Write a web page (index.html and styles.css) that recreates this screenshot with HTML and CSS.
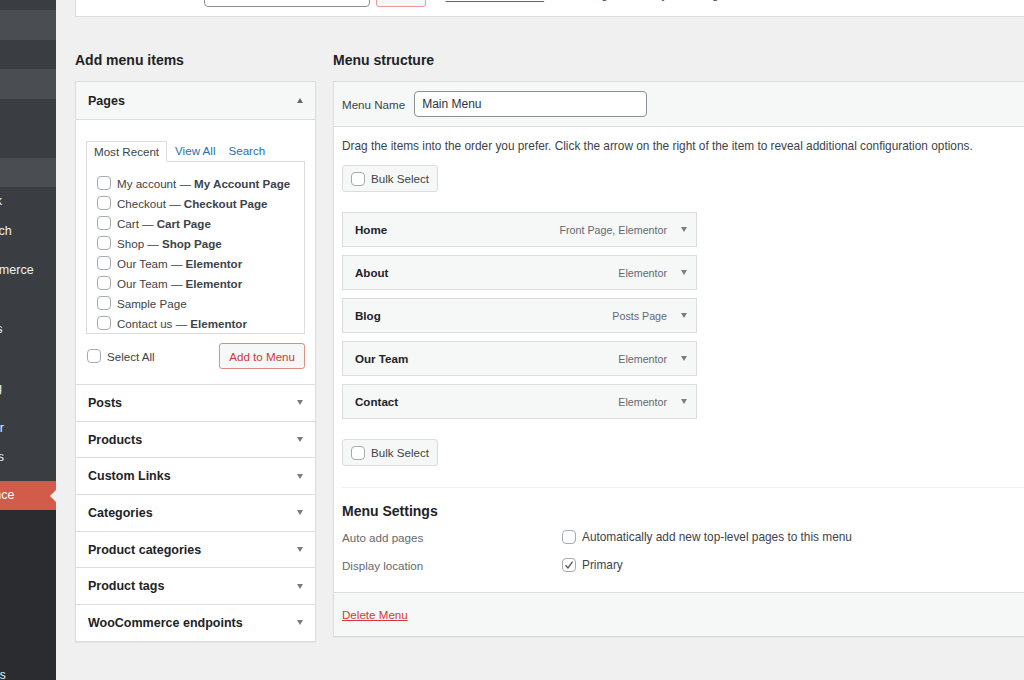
FILE: index.html
```html
<!DOCTYPE html>
<html lang="en">
<head>
    <meta charset="UTF-8">
    <meta name="viewport" content="width=device-width, initial-scale=1.0">
    <title>Menus</title>
    <link rel="stylesheet" href="styles.css">
</head>
<body>
    <div class="sidebar">
        <ul class="admin-menu">
            <li class="top-cut"></li>
            <li class="shade">Posts</li>
            <li>Media</li>
            <li class="shade">Pages</li>
            <li>Forms</li>
            <li>Links</li>
            <li class="shade">Blocks</li>
            <li>Feedback</li>
            <li>Site Search</li>
            <li class="sep"></li>
            <li>WooCommerce</li>
            <li>Products</li>
            <li>Payments</li>
            <li>Analytics</li>
            <li>Marketing</li>
            <li class="sep"></li>
            <li>Elementor</li>
            <li>Templates</li>
            <li class="sep sep-short"></li>
            <li class="current">Appearance</li>
            <li class="sub">Themes</li>
            <li class="sub">Editor</li>
            <li class="sub">Menus</li>
            <li class="sub">Header</li>
            <li class="sub">Widgets</li>
            <li class="sub spacer"></li>
            <li class="sub">Extensions</li>
        </ul>
    </div>

    <div class="main">
        <div class="top-box">
            <span class="top-label">Select a menu to edit:</span>
            <span class="top-select">Main Menu (Primary)</span>
            <span class="top-button">Select</span>
            <span class="top-note">or <a href="#">create a new menu</a>. Do not forget to save your changes!</span>
        </div>

        <div class="columns">
            <div class="col-left">
                <h2>Add menu items</h2>
                <div class="accordion">
                    <div class="section open">
                        <div class="section-title">Pages <span class="arrow-up"></span></div>
                        <div class="section-content">
                            <div class="tabs">
                                <span class="tab active">Most Recent</span>
                                <a class="tab" href="#">View All</a>
                                <a class="tab" href="#">Search</a>
                            </div>
                            <ul class="page-list">
                                <li><span class="cb"></span>My account — <strong>My Account Page</strong></li>
                                <li><span class="cb"></span>Checkout — <strong>Checkout Page</strong></li>
                                <li><span class="cb"></span>Cart — <strong>Cart Page</strong></li>
                                <li><span class="cb"></span>Shop — <strong>Shop Page</strong></li>
                                <li><span class="cb"></span>Our Team — <strong>Elementor</strong></li>
                                <li><span class="cb"></span>Our Team — <strong>Elementor</strong></li>
                                <li><span class="cb"></span>Sample Page</li>
                                <li><span class="cb"></span>Contact us — <strong>Elementor</strong></li>
                            </ul>
                            <div class="list-actions">
                                <label class="select-all"><span class="cb"></span>Select All</label>
                                <button class="btn-add">Add to Menu</button>
                            </div>
                        </div>
                    </div>
                    <div class="section"><div class="section-title">Posts <span class="arrow-down"></span></div></div>
                    <div class="section"><div class="section-title">Products <span class="arrow-down"></span></div></div>
                    <div class="section"><div class="section-title">Custom Links <span class="arrow-down"></span></div></div>
                    <div class="section"><div class="section-title">Categories <span class="arrow-down"></span></div></div>
                    <div class="section"><div class="section-title">Product categories <span class="arrow-down"></span></div></div>
                    <div class="section"><div class="section-title">Product tags <span class="arrow-down"></span></div></div>
                    <div class="section"><div class="section-title">WooCommerce endpoints <span class="arrow-down"></span></div></div>
                </div>
            </div>

            <div class="col-right">
                <h2>Menu structure</h2>
                <div class="menu-edit">
                    <div class="menu-header">
                        <label for="menu-name">Menu Name</label>
                        <input id="menu-name" class="menu-name" type="text" value="Main Menu">
                    </div>
                    <div class="menu-body">
                        <p class="hint">Drag the items into the order you prefer. Click the arrow on the right of the item to reveal additional configuration options.</p>
                        <span class="bulk"><span class="cb"></span>Bulk Select</span>

                        <ul class="menu-items">
                            <li><span class="item-title">Home</span><span class="item-type">Front Page, Elementor</span><span class="arrow-down"></span></li>
                            <li><span class="item-title">About</span><span class="item-type">Elementor</span><span class="arrow-down"></span></li>
                            <li><span class="item-title">Blog</span><span class="item-type">Posts Page</span><span class="arrow-down"></span></li>
                            <li><span class="item-title">Our Team</span><span class="item-type">Elementor</span><span class="arrow-down"></span></li>
                            <li><span class="item-title">Contact</span><span class="item-type">Elementor</span><span class="arrow-down"></span></li>
                        </ul>

                        <span class="bulk bulk-bottom"><span class="cb"></span>Bulk Select</span>

                        <div class="menu-settings">
                            <h3>Menu Settings</h3>
                            <div class="setting-row">
                                <span class="setting-label">Auto add pages</span>
                                <span class="setting-value"><span class="cb"></span>Automatically add new top-level pages to this menu</span>
                            </div>
                            <div class="setting-row">
                                <span class="setting-label">Display location</span>
                                <span class="setting-value"><span class="cb checked"><svg width="10" height="10" viewBox="0 0 10 10"><path d="M1.5 5.2 L4 8 L8.6 1.6" fill="none" stroke="#50575e" stroke-width="1.3"/></svg></span>Primary</span>
                            </div>
                        </div>
                    </div>
                    <div class="menu-footer">
                        <a class="delete" href="#">Delete Menu</a>
                    </div>
                </div>
            </div>
        </div>
    </div>
</body>
</html>
```

FILE: styles.css
```css
* {
    box-sizing: border-box;
}
body {
    margin: 0;
    height: 680px;
    overflow: hidden;
    display: flex;
    background: #f0f0f1;
    color: #3c434a;
    font-family: "Liberation Sans", Arial, sans-serif;
    font-size: 11.6px;
}
ul {
    list-style: none;
    margin: 0;
    padding: 0;
}
a {
    color: #2271b1;
}

/* admin sidebar (cropped on the left) */
.sidebar {
    flex: 0 0 56px;
    background: #2a2c30;
    overflow: hidden;
}
.admin-menu {
    margin-left: -89px;
    width: 145px;
}
.admin-menu li {
    height: 29.5px;
    line-height: 29.5px;
    padding-left: 36px;
    background: #3a3e43;
    color: #eef0f1;
    font-size: 12.5px;
    white-space: nowrap;
    position: relative;
}
.admin-menu .top-cut {
    height: 10px;
}
.admin-menu .shade {
    background: #4a4e53;
}
.admin-menu .sep {
    height: 10px;
}
.admin-menu .sep-short {
    height: 8px;
}
.admin-menu .current {
    background: #d35b4c;
    color: #fff;
}
.admin-menu .current::after {
    content: "";
    position: absolute;
    right: 0;
    top: 9px;
    border: 6px solid transparent;
    border-right-color: #f0f0f1;
}
.admin-menu .sub {
    background: #2a2c30;
    height: 26px;
    line-height: 26px;
    font-size: 12px;
}
.admin-menu .spacer {
    height: 22px;
}

/* main area */
.main {
    flex: 1;
    min-width: 0;
    padding-left: 19px;
}
.top-box {
    height: 17px;
    background: #fff;
    border: 1px solid #dcdcde;
    border-top: 0;
    border-right: 0;
    display: flex;
    align-items: flex-end;
    overflow: hidden;
    white-space: nowrap;
}
.top-label {
    width: 128px;
    line-height: 12px;
    margin-bottom: 20px;
}
.top-select {
    width: 166px;
    height: 30px;
    margin-bottom: 9px;
    padding: 0 8px;
    line-height: 28px;
    border: 1px solid #8c8f94;
    border-radius: 4px;
    flex-shrink: 0;
}
.top-button {
    width: 50px;
    height: 30px;
    margin: 0 0 9px 6px;
    line-height: 28px;
    text-align: center;
    color: #d63638;
    background: #f6f7f7;
    border: 1px solid #e89a94;
    border-radius: 3px;
    flex-shrink: 0;
}
.top-note {
    margin: 0 0 15px 6px;
    line-height: 12px;
}
.top-note a {
    color: #2271b1;
    text-underline-offset: 2px;
}

.columns {
    display: flex;
    gap: 17px;
}
.col-left {
    flex: 0 0 241px;
}
.col-right {
    flex: 0 0 760px;
}
h2 {
    margin: 34px 0 12px;
    font-size: 14px;
    line-height: 18px;
    color: #1d2327;
}

/* add menu items accordion */
.accordion {
    background: #fff;
    border: 1px solid #dcdcde;
    box-shadow: 0 1px 1px rgba(0, 0, 0, 0.04);
}
.section-title {
    height: 36.7px;
    display: flex;
    align-items: center;
    justify-content: space-between;
    padding: 0 12px;
    border-top: 1px solid #dcdcde;
    font-size: 12.5px;
    font-weight: bold;
    color: #1d2327;
}
.open .section-title {
    height: 38px;
    border-top: 0;
    border-bottom: 1px solid #dcdcde;
    background: #f6f7f7;
}
.arrow-down {
    width: 0;
    height: 0;
    border-left: 3.5px solid transparent;
    border-right: 3.5px solid transparent;
    border-top: 5px solid #787c82;
}
.arrow-up {
    width: 0;
    height: 0;
    border-left: 3.5px solid transparent;
    border-right: 3.5px solid transparent;
    border-bottom: 5px solid #646970;
}
.section-content {
    padding: 21px 10px 15px;
}
.tabs {
    display: flex;
    gap: 5px;
    height: 21px;
    margin-bottom: -1px;
    position: relative;
}
.tab {
    padding: 0 4px;
    line-height: 20px;
    color: #2271b1;
    text-decoration: none;
}
.tab.active {
    padding: 0 7px;
    margin-right: -1px;
    color: #3c434a;
    background: #fff;
    border: 1px solid #dcdcde;
    border-bottom-color: #fff;
}
.page-list {
    height: 173px;
    padding: 11px 10px 0;
    border: 1px solid #dcdcde;
    overflow: hidden;
}
.page-list li {
    height: 20px;
    display: flex;
    align-items: center;
    white-space: nowrap;
}
.page-list strong {
    margin-left: 3px;
    color: #3c434a;
}
.cb {
    flex: 0 0 14px;
    width: 14px;
    height: 14px;
    margin-right: 6px;
    border: 1px solid #a7aaad;
    border-radius: 4px;
    background: #fff;
    display: inline-flex;
    align-items: center;
    justify-content: center;
}
.list-actions {
    display: flex;
    justify-content: space-between;
    align-items: center;
    height: 26px;
    margin-top: 9px;
}
.select-all {
    display: flex;
    align-items: center;
    margin-left: 1px;
}
.btn-add {
    height: 26px;
    padding: 0 9px;
    font-family: inherit;
    font-size: 11.6px;
    color: #d63638;
    background: #f6f7f7;
    border: 1px solid #e08b84;
    border-radius: 3px;
}

/* menu structure */
.menu-edit {
    background: #fff;
    border: 1px solid #dcdcde;
    box-shadow: 0 1px 1px rgba(0, 0, 0, 0.04);
}
.menu-header {
    display: flex;
    align-items: center;
    gap: 9px;
    padding: 9px 8px;
    background: #f6f7f7;
    border-bottom: 1px solid #dcdcde;
}
.menu-name {
    width: 233px;
    height: 26px;
    padding: 0 7px;
    font-family: inherit;
    font-size: 12px;
    color: #2c3338;
    border: 1px solid #8c8f94;
    border-radius: 4px;
}
.menu-body {
    padding: 0 8px;
}
.hint {
    margin: 11px 0 11px;
    font-size: 11.85px;
    line-height: 16px;
    white-space: nowrap;
}
.bulk {
    display: inline-flex;
    align-items: center;
    height: 27px;
    padding: 0 8px;
    background: #f6f7f7;
    border: 1px solid #dcdcde;
    border-radius: 3px;
}
.menu-items {
    width: 355px;
    margin: 20px 0;
}
.menu-items li {
    height: 35px;
    margin-bottom: 8px;
    display: flex;
    align-items: center;
    padding: 0 9px 0 12px;
    background: #f6f7f7;
    border: 1px solid #dcdcde;
}
.menu-items li:last-child {
    margin-bottom: 0;
}
.item-title {
    font-weight: bold;
    color: #1d2327;
}
.item-type {
    margin-left: auto;
    margin-right: 14px;
    font-size: 10.7px;
    color: #646970;
}
.menu-settings {
    margin-top: 21px;
    padding-bottom: 13px;
    border-top: 1px solid #f0f0f1;
}
h3 {
    margin: 14px 0 3px;
    font-size: 14px;
    line-height: 18px;
    color: #1d2327;
}
.setting-row {
    display: grid;
    grid-template-columns: 220px 1fr;
    align-items: center;
    height: 28px;
}
.setting-label {
    color: #646970;
}
.setting-value {
    display: flex;
    align-items: center;
    font-size: 11.85px;
}
.menu-footer {
    height: 44px;
    display: flex;
    align-items: center;
    padding: 0 8px;
    background: #f6f7f7;
    border-top: 1px solid #dcdcde;
}
.delete {
    color: #d63638;
}
```
